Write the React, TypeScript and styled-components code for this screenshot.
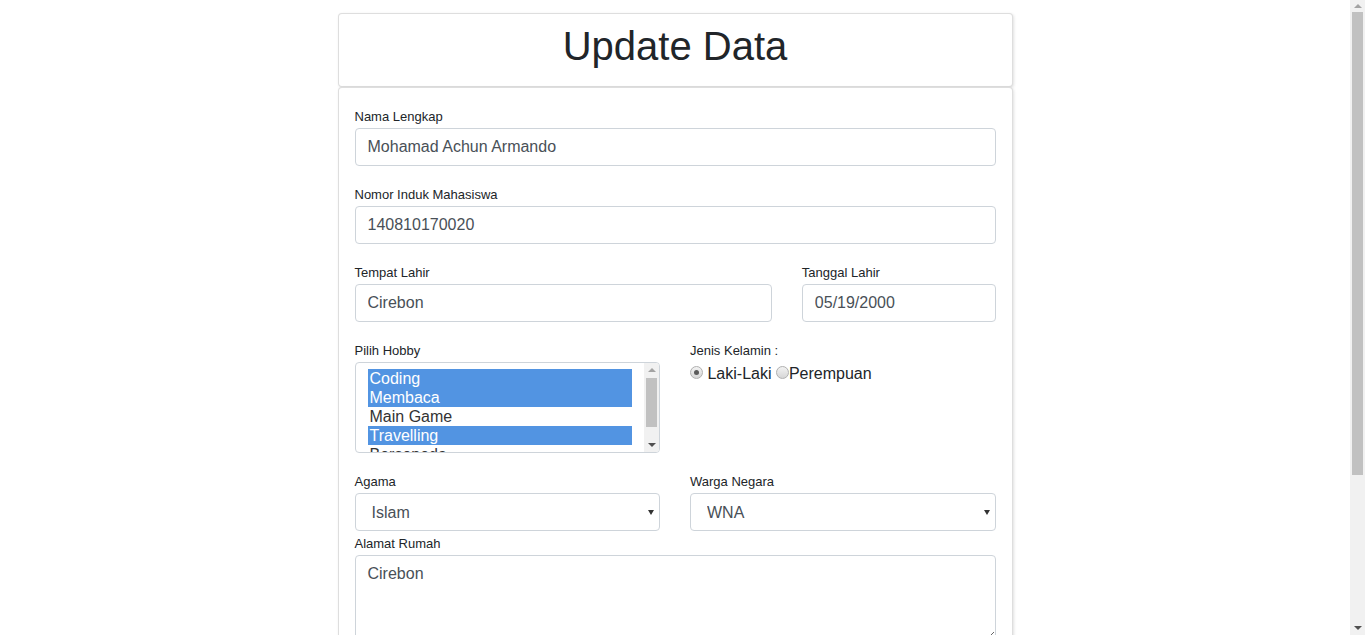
import styled, { createGlobalStyle } from "styled-components";

const GlobalStyle = createGlobalStyle`
  html, body {
    margin: 0;
    padding: 0;
    background: #fff;
    overflow: hidden;
  }
  body {
    font-family: "Liberation Sans", Arial, sans-serif;
    color: #212529;
  }
  * {
    box-sizing: border-box;
  }
`;

const Layout = styled.div`
  display: flex;
  height: 100vh;
`;

const Main = styled.div`
  flex: 1;
  overflow: hidden;
`;

/* scrollbar drawing (page + listbox) */
const ScrollBar = styled.div<{ $width?: number }>`
  width: ${(p) => p.$width ?? 15}px;
  flex-shrink: 0;
  display: flex;
  flex-direction: column;
  background: #f1f1f1;
`;

const ScrollBtn = styled.div<{ $h: number }>`
  height: ${(p) => p.$h}px;
  flex-shrink: 0;
  display: flex;
  align-items: center;
  justify-content: center;
`;

const ArrowUp = styled.span<{ $color: string }>`
  width: 0;
  height: 0;
  border-left: 4px solid transparent;
  border-right: 4px solid transparent;
  border-bottom: 4px solid ${(p) => p.$color};
`;

const ArrowDown = styled.span<{ $color: string }>`
  width: 0;
  height: 0;
  border-left: 4px solid transparent;
  border-right: 4px solid transparent;
  border-top: 4px solid ${(p) => p.$color};
`;

const ScrollTrack = styled.div`
  flex: 1;
  padding: 0 2px;
`;

const ScrollThumb = styled.div<{ $h: number; $top?: number }>`
  height: ${(p) => p.$h}px;
  margin-top: ${(p) => p.$top ?? 0}px;
  background: #c1c1c1;
`;

const Page = styled.div`
  padding: 13px 0 41px;
`;

const Wrapper = styled.div`
  width: 675px;
  margin: 0 auto;
`;

const Card = styled.div`
  background: #fff;
  border: 1px solid rgba(0, 0, 0, 0.13);
  border-radius: 4px;
  box-shadow: 1px 1px 3px rgba(0, 0, 0, 0.12);
`;

const HeaderCard = styled(Card)`
  padding: 8px 16px 16px;
`;

const Title = styled.h1`
  margin: 0;
  font-size: 40px;
  line-height: 48px;
  font-weight: 400;
  text-align: center;
  color: #212529;
`;

const BodyCard = styled(Card)`
  padding: 21px 16px 20px;
`;

/* bootstrap-like grid: span out of 12 columns, 30px gutter */
const Row = styled.div<{ $span?: number; $mb?: number }>`
  display: grid;
  grid-template-columns: ${(p) =>
    p.$span ? `calc((100% + 30px) * ${p.$span} / 12 - 30px) 1fr` : "1fr"};
  column-gap: 30px;
  margin-bottom: ${(p) => (p.$mb ?? 21)}px;
`;

const Group = styled.div``;

const Label = styled.label`
  display: block;
  font-size: 13px;
  line-height: 15px;
  margin-bottom: 4px;
  color: #212529;
`;

const Input = styled.input`
  display: block;
  width: 100%;
  height: 38px;
  padding: 6px 12px;
  font-family: "Liberation Sans", Arial, sans-serif;
  font-size: 16px;
  line-height: 24px;
  color: #495057;
  background: #fff;
  border: 1px solid #ced4da;
  border-radius: 4px;
  outline: none;
`;

const ListBox = styled.div`
  display: flex;
  height: 91px;
  background: #fff;
  border: 1px solid #ced4da;
  border-radius: 4px;
  overflow: hidden;
`;

const ListOptions = styled.div`
  flex: 1;
  padding: 6px 12px;
  overflow: hidden;
`;

const ListOption = styled.div<{ $selected?: boolean }>`
  height: 19px;
  padding: 0 2px;
  font-size: 16px;
  line-height: 19px;
  white-space: nowrap;
  color: ${(p) => (p.$selected ? "#fff" : "#333")};
  background: ${(p) => (p.$selected ? "#5294e2" : "transparent")};
`;

const RadioLine = styled.div`
  font-size: 16px;
  line-height: 24px;
  color: #212529;
`;

const Radio = styled.input`
  appearance: none;
  -webkit-appearance: none;
  display: inline-block;
  width: 13px;
  height: 13px;
  margin: 0;
  vertical-align: baseline;
  border: 1px solid #b0b0b0;
  border-radius: 50%;
  background: linear-gradient(#f2f2f2, #d6d6d6);
  position: relative;

  &:checked::after {
    content: "";
    position: absolute;
    left: 3px;
    top: 3px;
    width: 5px;
    height: 5px;
    border-radius: 50%;
    background: #5a5a5a;
  }
`;

const SelectWrap = styled.div`
  position: relative;

  &::after {
    content: "";
    position: absolute;
    right: 6px;
    top: 17px;
    border-left: 3px solid transparent;
    border-right: 3px solid transparent;
    border-top: 5px solid #333;
    pointer-events: none;
  }
`;

const Select = styled.select`
  appearance: none;
  -webkit-appearance: none;
  display: block;
  width: 100%;
  height: 38px;
  padding: 6px 20px 6px 16px;
  font-family: "Liberation Sans", Arial, sans-serif;
  font-size: 16px;
  color: #495057;
  background: #fff;
  border: 1px solid #ced4da;
  border-radius: 4px;
  outline: none;
`;

const TextArea = styled.textarea`
  display: block;
  width: 100%;
  height: 86px;
  padding: 6px 12px;
  font-family: "Liberation Sans", Arial, sans-serif;
  font-size: 16px;
  line-height: 24px;
  color: #495057;
  background: #fff;
  border: 1px solid #ced4da;
  border-radius: 4px;
  outline: none;
`;

const Button = styled.button`
  height: 38px;
  padding: 6px 12px;
  font-family: "Liberation Sans", Arial, sans-serif;
  font-size: 16px;
  color: #fff;
  background: #007bff;
  border: 1px solid #007bff;
  border-radius: 4px;
`;

const hobbies = [
  { name: "Coding", selected: true },
  { name: "Membaca", selected: true },
  { name: "Main Game", selected: false },
  { name: "Travelling", selected: true },
  { name: "Bersepeda", selected: false },
  { name: "Olahraga", selected: false },
];

export default function App() {
  return (
    <>
      <GlobalStyle />
      <Layout>
        <Main>
          <Page>
            <Wrapper>
              <HeaderCard>
                <Title>Update Data</Title>
              </HeaderCard>
              <BodyCard>
                <Row>
                  <Group>
                    <Label>Nama Lengkap</Label>
                    <Input defaultValue="Mohamad Achun Armando" />
                  </Group>
                </Row>
                <Row>
                  <Group>
                    <Label>Nomor Induk Mahasiswa</Label>
                    <Input defaultValue="140810170020" />
                  </Group>
                </Row>
                <Row $span={8}>
                  <Group>
                    <Label>Tempat Lahir</Label>
                    <Input defaultValue="Cirebon" />
                  </Group>
                  <Group>
                    <Label>Tanggal Lahir</Label>
                    <Input defaultValue="05/19/2000" />
                  </Group>
                </Row>
                <Row $span={6}>
                  <Group>
                    <Label>Pilih Hobby</Label>
                    <ListBox role="listbox" aria-multiselectable="true">
                      <ListOptions>
                        {hobbies.map((h) => (
                          <ListOption key={h.name} $selected={h.selected} role="option" aria-selected={h.selected}>
                            {h.name}
                          </ListOption>
                        ))}
                      </ListOptions>
                      <ScrollBar>
                        <ScrollBtn $h={14}>
                          <ArrowUp $color="#a3a3a3" />
                        </ScrollBtn>
                        <ScrollTrack>
                          <ScrollThumb $h={49} $top={1} />
                        </ScrollTrack>
                        <ScrollBtn $h={14}>
                          <ArrowDown $color="#505050" />
                        </ScrollBtn>
                      </ScrollBar>
                    </ListBox>
                  </Group>
                  <Group>
                    <Label>Jenis Kelamin :</Label>
                    <RadioLine>
                      <Radio type="radio" name="jk" defaultChecked /> Laki-Laki{" "}
                      <Radio type="radio" name="jk" />Perempuan
                    </RadioLine>
                  </Group>
                </Row>
                <Row $span={6} $mb={5}>
                  <Group>
                    <Label>Agama</Label>
                    <SelectWrap>
                      <Select defaultValue="Islam">
                        <option>Islam</option>
                        <option>Kristen</option>
                        <option>Katolik</option>
                        <option>Hindu</option>
                        <option>Buddha</option>
                      </Select>
                    </SelectWrap>
                  </Group>
                  <Group>
                    <Label>Warga Negara</Label>
                    <SelectWrap>
                      <Select defaultValue="WNA">
                        <option>WNI</option>
                        <option>WNA</option>
                      </Select>
                    </SelectWrap>
                  </Group>
                </Row>
                <Row>
                  <Group>
                    <Label>Alamat Rumah</Label>
                    <TextArea defaultValue="Cirebon" />
                  </Group>
                </Row>
                <Row>
                  <Group>
                    <Label>Nomor Telepon</Label>
                    <Input defaultValue="081234567890" />
                  </Group>
                </Row>
                <Row $mb={0}>
                  <Group>
                    <Button type="button">Update</Button>
                  </Group>
                </Row>
              </BodyCard>
            </Wrapper>
          </Page>
        </Main>
        <ScrollBar>
          <ScrollBtn $h={12}>
            <ArrowUp $color="#a3a3a3" />
          </ScrollBtn>
          <ScrollTrack>
            <ScrollThumb $h={463} />
          </ScrollTrack>
          <ScrollBtn $h={14}>
            <ArrowDown $color="#505050" />
          </ScrollBtn>
        </ScrollBar>
      </Layout>
    </>
  );
}
